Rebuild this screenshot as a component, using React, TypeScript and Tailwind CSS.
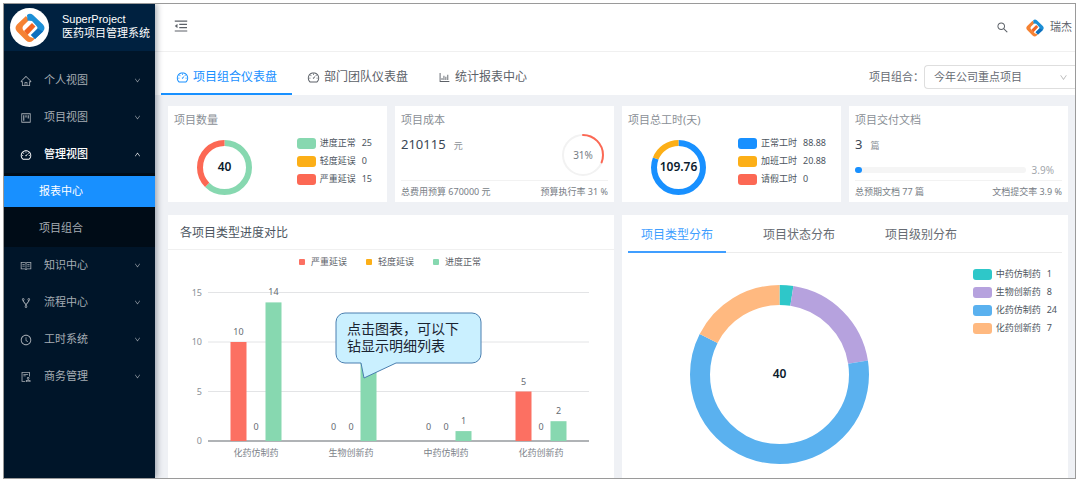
import React from 'react';
import clsx from 'clsx';
import type { IconType } from 'react-icons';
import {
  AiOutlineAudit,
  AiOutlineBarChart,
  AiOutlineClockCircle,
  AiOutlineDashboard,
  AiOutlineDown,
  AiOutlineFork,
  AiOutlineHome,
  AiOutlineMenuFold,
  AiOutlineProject,
  AiOutlineRead,
  AiOutlineSearch,
  AiOutlineUp,
} from 'react-icons/ai';

interface MenuItem {
  label: string;
  icon: IconType;
  children?: string[];
}

interface Slice {
  name: string;
  value: number;
  color: string;
}

const MENU: MenuItem[] = [
  { label: '个人视图', icon: AiOutlineHome },
  { label: '项目视图', icon: AiOutlineProject },
  { label: '管理视图', icon: AiOutlineDashboard, children: ['报表中心', '项目组合'] },
  { label: '知识中心', icon: AiOutlineRead },
  { label: '流程中心', icon: AiOutlineFork },
  { label: '工时系统', icon: AiOutlineClockCircle },
  { label: '商务管理', icon: AiOutlineAudit },
];

const TABS = [
  { label: '项目组合仪表盘', icon: AiOutlineDashboard },
  { label: '部门团队仪表盘', icon: AiOutlineDashboard },
  { label: '统计报表中心', icon: AiOutlineBarChart },
];

const PROJECTS: Slice[] = [
  { name: '进度正常', value: 25, color: '#87d8b0' },
  { name: '轻度延误', value: 0, color: '#fcaf17' },
  { name: '严重延误', value: 15, color: '#fc6854' },
];

const HOURS: Slice[] = [
  { name: '正常工时', value: 88.88, color: '#1890ff' },
  { name: '加班工时', value: 20.88, color: '#fcaf17' },
  { name: '请假工时', value: 0, color: '#fc6854' },
];

const TYPES: Slice[] = [
  { name: '中药仿制药', value: 1, color: '#2ec7c9' },
  { name: '生物创新药', value: 8, color: '#b6a2de' },
  { name: '化药仿制药', value: 24, color: '#5ab1ef' },
  { name: '化药创新药', value: 7, color: '#ffb980' },
];

const SERIES = [
  { name: '严重延误', color: '#fc7062' },
  { name: '轻度延误', color: '#fcaf17' },
  { name: '进度正常', color: '#87d8b0' },
];

// The hint bubble sits where the label of the 8 bar would be
const GROUPS = [
  { name: '化药仿制药', values: [10, 0, 14], labels: ['10', '0', '14'] },
  { name: '生物创新药', values: [0, 0, 8], labels: ['0', '0', ''] },
  { name: '中药仿制药', values: [0, 0, 1], labels: ['0', '0', '1'] },
  { name: '化药创新药', values: [5, 0, 2], labels: ['5', '0', '2'] },
];

const Logo: React.FC<{ className?: string }> = ({ className }) => (
  <svg viewBox="0 0 30 30" className={className} aria-hidden="true">
    <path d="M11 3 L2 11.500 Q-1 15 2 18.500 L11 27.500 Q14.500 30.500 18 27.500 L20 25.500 L15 24 L8.500 17.500 Q6.500 15 8.500 12.500 L14 7 Z" fill="#f58233" />
    <path d="M9 18 L17 10 L20.500 13.500 L12.500 22 Z" fill="#f26522" />
    <path d="M12 2 Q15 -0.500 18 2 L28 11.500 Q31 15 28 18.500 L20 26 L16 22 L21.500 17 Q23.500 15 21.500 13 L17 8 L12.500 7.500 Z" fill="#1c8fd6" />
    <path d="M16 22 L22.500 15.500 L28 18.500 L20 26 Z" fill="#0f6fbd" />
  </svg>
);

interface DonutProps {
  data: Slice[];
  size: number;
  thickness: number;
  label: string;
}

const Donut: React.FC<DonutProps> = ({ data, size, thickness, label }) => {
  const total = data.reduce((sum, d) => sum + d.value, 0);
  const c = size / 2;
  const r = c - thickness / 2;
  let start = 0;

  return (
    <svg width={size} height={size} viewBox={`0 0 ${size} ${size}`} className="shrink-0" role="img" aria-label={label}>
      {data.map((d) => {
        const share = (d.value / total) * 100;
        const offset = -start;
        start += share;
        return share > 0 ? (
          <circle
            key={d.name}
            cx={c}
            cy={c}
            r={r}
            fill="none"
            stroke={d.color}
            strokeWidth={thickness}
            pathLength={100}
            strokeDasharray={`${share} ${100 - share}`}
            strokeDashoffset={offset}
            transform={`rotate(-90 ${c} ${c})`}
          />
        ) : null;
      })}
      <text x={c} y={c + 3} textAnchor="middle" className="fill-[#0b1c2e] text-[12px] font-semibold">
        {label}
      </text>
    </svg>
  );
};

const Legend: React.FC<{ data: Slice[] }> = ({ data }) => (
  <ul className="text-[9px] leading-[18px] text-[#4c5560]">
    {data.map((d) => (
      <li key={d.name} className="flex items-center">
        <span className="h-[11px] w-[19px] rounded-[3px]" style={{ backgroundColor: d.color }} />
        <span className="ml-1">{d.name}</span>
        <span className="ml-1.5">{d.value}</span>
      </li>
    ))}
  </ul>
);

const Card: React.FC<{ title: string; children: React.ReactNode }> = ({ title, children }) => (
  <section className="flex h-24 flex-col bg-white px-[6px]">
    <h2 className="pt-[5px] text-[11px] leading-[18px] text-[#8a8f96]">{title}</h2>
    {children}
  </section>
);

const DonutCard: React.FC<{ title: string; data: Slice[]; total: string }> = ({ title, data, total }) => (
  <Card title={title}>
    <div className="flex items-start justify-between pt-[5px] pr-[9px] pl-[23px]">
      <div className="pt-[6px]">
        <Donut data={data} size={55} thickness={6} label={total} />
      </div>
      <Legend data={data} />
    </div>
  </Card>
);

const CardFooter: React.FC<{ left: string; right: string }> = ({ left, right }) => (
  <div className="mt-auto flex h-[22px] items-center justify-between border-t border-[#f2f2f2] text-[9px] text-[#777d85]">
    <span>{left}</span>
    <span>{right}</span>
  </div>
);

const Amount: React.FC<{ value: string; unit: string }> = ({ value, unit }) => (
  <p className="flex items-baseline gap-2 text-[13px] leading-5 text-[#3a4654]">
    {value}
    <span className="text-[9px] text-[#8a8f96]">{unit}</span>
  </p>
);

const Sidebar: React.FC = () => (
  <aside className="z-10 flex w-[151px] shrink-0 flex-col bg-[#001529] shadow-[2px_0_6px_rgba(0,21,41,0.35)]">
    <div className="flex h-[47px] items-center bg-[#002140] pl-[6px] text-white">
      <span className="flex size-[39px] shrink-0 items-center justify-center rounded-full bg-white">
        <Logo className="size-[30px]" />
      </span>
      <h1 className="ml-[13px] pb-1 text-[11px] leading-[14px] whitespace-nowrap">
        <span className="block font-['Liberation_Sans',sans-serif]">SuperProject</span>
        医药项目管理系统
      </h1>
    </div>
    <nav className="pt-[11px] text-[11px] text-[#a6adb4]">
      {MENU.map(({ label, icon: Icon, children }) => (
        <div key={label}>
          <button
            type="button"
            aria-expanded={!!children}
            className={clsx('flex h-[37px] w-full items-center pr-[14px] pl-4', children && 'font-medium text-white')}
          >
            <Icon className="size-3" />
            <span className="ml-3">{label}</span>
            {children ? <AiOutlineUp className="ml-auto size-[7px]" /> : <AiOutlineDown className="ml-auto size-[7px]" />}
          </button>
          {children && (
            <div className="flex flex-col gap-[6px] bg-[#000c17] py-[3px]">
              {children.map((child, i) => (
                <a
                  key={child}
                  href="#"
                  className={clsx('flex h-[31px] items-center pl-[35px]', i === 0 && 'bg-[#1890ff] text-white')}
                >
                  {child}
                </a>
              ))}
            </div>
          )}
        </div>
      ))}
    </nav>
  </aside>
);

const Header: React.FC = () => (
  <header className="flex h-12 items-center border-b border-[#f0f0f0] bg-white pr-[3px] pl-[18px] text-[#5c6168]">
    <button type="button" aria-label="收起菜单" className="pb-1">
      <AiOutlineMenuFold className="size-4" />
    </button>
    <button type="button" aria-label="搜索" className="ml-auto">
      <AiOutlineSearch className="size-[13px]" />
    </button>
    <button type="button" className="ml-[17px] flex items-center gap-[6px] text-[11px]">
      <Logo className="size-[18px]" />
      瑞杰
    </button>
  </header>
);

const TabBar: React.FC = () => (
  <div className="flex h-[43px] items-end justify-between bg-white pl-[6px]">
    <div role="tablist" className="flex">
      {TABS.map(({ label, icon: Icon }, i) => (
        <button
          key={label}
          type="button"
          role="tab"
          aria-selected={i === 0}
          className={clsx(
            'flex h-[34px] items-center gap-1 border-b-2 px-[15px] text-[12px]',
            i === 0 ? 'border-[#1890ff] text-[#1890ff]' : 'border-transparent text-[#5c6168]',
          )}
        >
          <Icon className="size-[13px]" />
          {label}
        </button>
      ))}
    </div>
    <div className="mb-[6px] flex items-center text-[11px] text-[#666b72]">
      <label htmlFor="portfolio">项目组合：</label>
      <div className="relative">
        <select
          id="portfolio"
          className="h-6 w-[151px] appearance-none rounded-l border border-r-0 border-[#dedede] bg-white pl-[9px]"
        >
          <option>今年公司重点项目</option>
        </select>
        <AiOutlineDown className="pointer-events-none absolute top-2 right-[7px] size-[9px] text-[#b5b5b5]" />
      </div>
    </div>
  </div>
);

const BarChart: React.FC = () => {
  const baseline = 191;
  const unit = 9.9;
  const left = 40;
  const step = 95;

  return (
    <svg viewBox="0 0 446 224" className="block w-full text-[9px]" role="img" aria-label="各项目类型进度对比">
      {SERIES.map((s, i) => (
        <g key={s.name}>
          <rect x={131 + i * 67} y={9} width={6} height={6} rx={1} fill={s.color} />
          <text x={143 + i * 67} y={15} className="fill-[#5c6168]">{s.name}</text>
        </g>
      ))}
      {[15, 10, 5, 0].map((tick) => (
        <g key={tick}>
          <path
            d={`M${left} ${baseline - tick * unit}H421`}
            stroke={tick === 0 ? '#b0b3b6' : '#e3e4e6'}
            strokeWidth={tick === 0 ? 2 : 1}
          />
          <text x={34} y={baseline - tick * unit + 3} textAnchor="end" className="fill-[#8a8f96]">{tick}</text>
        </g>
      ))}
      {GROUPS.map((group, g) => {
        const center = left + step * g + 48;
        return (
          <g key={group.name}>
            {group.values.map((value, i) => {
              const x = center + (i - 1) * 17.5;
              const height = value * unit;
              return (
                <g key={SERIES[i].name}>
                  <rect x={x - 8} y={baseline - height} width={16} height={height} fill={SERIES[i].color} />
                  {group.labels[i] && (
                    <text
                      x={x}
                      y={baseline - height - (value === 0 ? 11 : 7)}
                      textAnchor="middle"
                      className="fill-[#666b72]"
                    >
                      {group.labels[i]}
                    </text>
                  )}
                </g>
              );
            })}
            <text x={center} y={206} textAnchor="middle" className="fill-[#7d838a]">{group.name}</text>
          </g>
        );
      })}
      {/* Hint bubble pointing at the bars */}
      <path
        d="M177 63H304a9 9 0 0 1 9 9V104a9 9 0 0 1 -9 9H228L196 128L193 113H177a9 9 0 0 1 -9 -9V72a9 9 0 0 1 9 -9Z"
        fill="#caf0ff"
        stroke="#4a7fb0"
      />
      <text className="fill-[#1a2330] text-[14px]">
        <tspan x={179} y={84}>点击图表，可以下</tspan>
        <tspan x={179} y={101}>钻显示明细列表</tspan>
      </text>
    </svg>
  );
};

const ProgressPanel: React.FC = () => (
  <section className="bg-white">
    <h2 className="border-b border-[#f0f0f0] pt-[2px] pl-3 text-[12px] leading-8 text-[#4c5560]">各项目类型进度对比</h2>
    <BarChart />
  </section>
);

const DistributionPanel: React.FC = () => (
  <section className="bg-white px-[6px]">
    <div role="tablist" className="flex h-[38px] items-end gap-6 border-b border-[#ececec] text-[12px]">
      {['项目类型分布', '项目状态分布', '项目级别分布'].map((label, i) => (
        <button
          key={label}
          type="button"
          role="tab"
          aria-selected={i === 0}
          className={clsx(
            '-mb-px h-[34px] border-b-2 px-[13px]',
            i === 0 ? 'border-[#409eff] text-[#409eff]' : 'border-transparent text-[#666b72]',
          )}
        >
          {label}
        </button>
      ))}
    </div>
    <div className="flex items-start justify-between pt-3 pr-[5px] pl-[62px]">
      <div className="pt-5">
        <Donut data={TYPES} size={179} thickness={20} label="40" />
      </div>
      <Legend data={TYPES} />
    </div>
  </section>
);

export default function App() {
  return (
    <div className="flex min-h-screen bg-white py-[3px] pr-1 pl-[3px] font-['Noto_Sans','Noto_Sans_CJK_SC',sans-serif]">
      <div className="flex flex-1 overflow-hidden border border-[#9a9a9a]">
        <Sidebar />
        <div className="flex min-w-0 flex-1 flex-col bg-[#eff1f5]">
          <Header />
          <TabBar />
          <main className="flex flex-1 flex-col gap-[13px] pt-[11px] pr-[7px] pl-[13px]">
            <div className="grid grid-cols-4 gap-2">
              <DonutCard title="项目数量" data={PROJECTS} total="40" />
              <Card title="项目成本">
                <div className="flex justify-between pt-[5px] pr-1">
                  <Amount value="210115" unit="元" />
                  <svg width="42" height="42" viewBox="0 0 42 42" role="img" aria-label="预算执行率">
                    <circle cx="21" cy="21" r="20" fill="none" stroke="#f2f2f2" strokeWidth="2" />
                    <circle
                      cx="21"
                      cy="21"
                      r="20"
                      fill="none"
                      stroke="#fc6854"
                      strokeWidth="2"
                      strokeLinecap="round"
                      pathLength={100}
                      strokeDasharray="31 69"
                      transform="rotate(-90 21 21)"
                    />
                    <text x="21" y="25" textAnchor="middle" className="fill-[#777d85] text-[10px]">31%</text>
                  </svg>
                </div>
                <CardFooter left="总费用预算 670000 元" right="预算执行率 31 %" />
              </Card>
              <DonutCard title="项目总工时(天)" data={HOURS} total="109.76" />
              <Card title="项目交付文档">
                <div className="pt-[5px]">
                  <Amount value="3" unit="篇" />
                  <div className="mt-[6px] flex items-center gap-[6px] pr-2 text-[10px] leading-4 text-[#a3a7ac]">
                    <div className="h-[6px] flex-1 rounded-full bg-[#f5f5f5]">
                      <div className="h-full min-w-[7px] rounded-full bg-[#1890ff]" style={{ width: '3.9%' }} />
                    </div>
                    3.9%
                  </div>
                </div>
                <CardFooter left="总预期文档 77 篇" right="文档提交率 3.9 %" />
              </Card>
            </div>
            <div className="grid flex-1 grid-cols-2 gap-2">
              <ProgressPanel />
              <DistributionPanel />
            </div>
          </main>
        </div>
      </div>
    </div>
  );
}
